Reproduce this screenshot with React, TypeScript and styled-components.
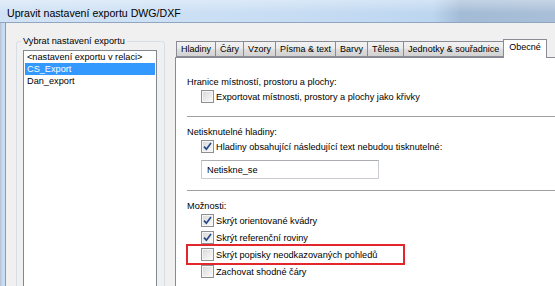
import styled, { createGlobalStyle } from 'styled-components';

const GlobalStyle = createGlobalStyle`
  html, body {
    margin: 0;
    padding: 0;
  }
  body {
    font-family: 'Liberation Sans', Arial, sans-serif;
    font-size: 9.2px;
    color: #000;
    background: #fff;
  }
  * {
    box-sizing: border-box;
  }
`;

const Window = styled.div`
  width: 555px;
  height: 286px;
  overflow: hidden;
  display: flex;
  flex-direction: column;
  background: #c6dbf1;
`;

const TitleBar = styled.div`
  flex: none;
  height: 23px;
  display: flex;
  align-items: center;
  padding: 4px 0 0 7px;
  font-size: 10.6px;
  background:
    linear-gradient(to bottom, rgba(255, 255, 255, 0.35), rgba(255, 255, 255, 0) 60%),
    linear-gradient(
      to right,
      #d2e3f5 0%,
      #c9def4 45%,
      #bdd6f0 78%,
      #a3bbd6 83%,
      #a9bfd8 100%
    );
  border-bottom: 1px solid #90a6c0;
`;

const Frame = styled.div`
  flex: 1;
  display: flex;
  min-height: 0;
`;

const FrameEdge = styled.div`
  flex: none;
  width: 6px;
  background: linear-gradient(to right, #b8c6d6 0 1px, #c9ddf2 2px);
  border-right: 1px solid #8d9db1;
`;

const Client = styled.div`
  flex: 1;
  min-width: 0;
  display: flex;
  align-items: flex-start;
  gap: 10px;
  padding: 12px 0 0 10px;
  background: #f0f0f0;
`;

const GroupBox = styled.fieldset`
  flex: none;
  width: 149px;
  height: 300px;
  margin: 0;
  padding: 0 7px 0 6px;
  border: 1px solid #d5dfe5;
  border-radius: 3px;
`;

const GroupLegend = styled.legend`
  padding: 0 2px;
  margin-left: -2px;
  line-height: 12px;
`;

const ListBox = styled.div`
  margin-top: 3px;
  width: 134px;
  height: 260px;
  padding: 0 1px;
  background: #fff;
  border: 1px solid #828790;
`;

const ListItem = styled.div<{ $selected?: boolean }>`
  height: 12px;
  line-height: 12px;
  padding-left: 2px;
  white-space: nowrap;
  background: ${p => (p.$selected ? '#3399ff' : 'transparent')};
  color: ${p => (p.$selected ? '#fff' : '#000')};
`;

const TabControl = styled.div`
  flex: none;
  width: 390px;
  height: 260px;
  margin-top: 4px;
  display: flex;
  flex-direction: column;
`;

const TabRow = styled.div`
  display: flex;
  align-items: flex-end;
  height: 18px;
  padding-left: 2px;
  font-size: 9px;
`;

const Tab = styled.div<{ $active?: boolean }>`
  position: relative;
  height: ${p => (p.$active ? '19px' : '16px')};
  margin-left: -1px;
  margin-bottom: ${p => (p.$active ? '-1px' : '0')};
  padding: ${p => (p.$active ? '2px 5px 0' : '0 4px')};
  display: flex;
  align-items: ${p => (p.$active ? 'flex-start' : 'center')};
  white-space: nowrap;
  border: 1px solid #898c95;
  border-bottom: ${p => (p.$active ? 'none' : '1px solid #898c95')};
  background: ${p =>
    p.$active
      ? '#fff'
      : 'linear-gradient(to bottom, #f2f2f2 0%, #ebebeb 45%, #dddddd 55%, #d2d2d2 100%)'};
  z-index: ${p => (p.$active ? 1 : 0)};
`;

const TabPanel = styled.div`
  flex: 1;
  padding: 18px 0 0 11px;
  background: #fff;
  border: 1px solid #898c95;
`;

const SectionLabel = styled.div`
  height: 12px;
  line-height: 12px;
`;

const CheckRow = styled.div<{ $marked?: boolean }>`
  display: flex;
  align-items: center;
  gap: 2px;
  height: ${p => (p.$marked ? '21px' : '17px')};
  width: ${p => (p.$marked ? '219px' : 'auto')};
  padding-left: ${p => (p.$marked ? '13px' : '14px')};
  margin: ${p => (p.$marked ? '-2px 0 -2px -1px' : '0')};
  border: ${p => (p.$marked ? '2px solid #e3262b' : 'none')};
  white-space: nowrap;
`;

const Box = styled.span`
  flex: none;
  width: 13px;
  height: 13px;
  display: flex;
  align-items: center;
  justify-content: center;
  border: 1px solid #8e8f8f;
  box-shadow: inset 0 0 0 1px #f6f6f6;
  background: linear-gradient(135deg, #d6d6d6 0%, #ececec 55%, #fbfbfb 100%);
`;

const Separator = styled.div`
  height: 1px;
  margin: 11px 0 9px;
  background: #a0a0a0;
`;

const TextInput = styled.div`
  width: 178px;
  height: 19px;
  margin: 5px 0 0 14px;
  padding-left: 5px;
  display: flex;
  align-items: center;
  border: 1px solid #c9ccd3;
  border-top-color: #abadb3;
  background: #fff;
`;

const Check = ({ checked }: { checked?: boolean }) => (
  <Box>
    {checked && (
      <svg width="9" height="9" viewBox="0 0 9 9">
        <path d="M1 4.6 L3.4 7.2 L8 1" fill="none" stroke="#2a4a86" strokeWidth="1.7" />
      </svg>
    )}
  </Box>
);

const tabs = [
  'Hladiny',
  'Čáry',
  'Vzory',
  'Písma & text',
  'Barvy',
  'Tělesa',
  'Jednotky & souřadnice',
  'Obecné',
];

const App = () => {
  return (
    <>
      <GlobalStyle />
      <Window>
        <TitleBar>Upravit nastavení exportu DWG/DXF</TitleBar>
        <Frame>
          <FrameEdge />
          <Client>
            <GroupBox>
              <GroupLegend>Vybrat nastavení exportu</GroupLegend>
              <ListBox>
                <ListItem>&lt;nastavení exportu v relaci&gt;</ListItem>
                <ListItem $selected>CS_Export</ListItem>
                <ListItem>Dan_export</ListItem>
              </ListBox>
            </GroupBox>

            <TabControl>
              <TabRow>
                {tabs.map(t => (
                  <Tab key={t} $active={t === 'Obecné'}>
                    {t}
                  </Tab>
                ))}
              </TabRow>
              <TabPanel>
                <SectionLabel>Hranice místností, prostoru a plochy:</SectionLabel>
                <CheckRow>
                  <Check />
                  Exportovat místnosti, prostory a plochy jako křivky
                </CheckRow>

                <Separator />

                <SectionLabel>Netisknutelné hladiny:</SectionLabel>
                <CheckRow>
                  <Check checked />
                  Hladiny obsahující následující text nebudou tisknutelné:
                </CheckRow>
                <TextInput>Netiskne_se</TextInput>

                <Separator />

                <SectionLabel>Možnosti:</SectionLabel>
                <CheckRow>
                  <Check checked />
                  Skrýt orientované kvádry
                </CheckRow>
                <CheckRow>
                  <Check checked />
                  Skrýt referenční roviny
                </CheckRow>
                <CheckRow $marked>
                  <Check />
                  Skrýt popisky neodkazovaných pohledů
                </CheckRow>
                <CheckRow>
                  <Check />
                  Zachovat shodné čáry
                </CheckRow>
              </TabPanel>
            </TabControl>
          </Client>
        </Frame>
      </Window>
    </>
  );
};

export default App;
